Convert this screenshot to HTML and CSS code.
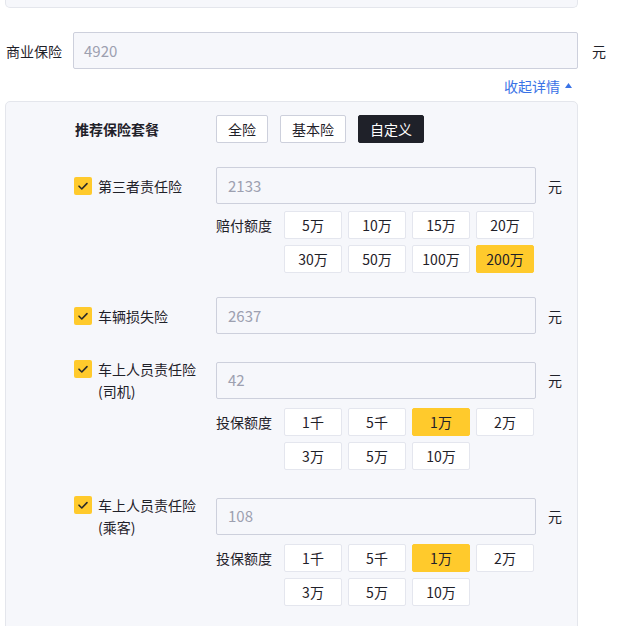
FILE: index.html
```html
<!DOCTYPE html>
<html>
<head>
<meta charset="utf-8">
<link rel="stylesheet" href="styles.css">
</head>
<body>
<div class="page">
  <div class="topbox"></div>

  <div class="main-row">
    <div class="main-label">商业保险</div>
    <div class="input main-input">4920</div>
    <div class="unit">元</div>
  </div>

  <div class="toggle-line">
    <span class="toggle">收起详情<svg class="tri" width="7" height="5" viewBox="0 0 7 5"><path d="M0 5 L3.5 0 L7 5 Z" fill="#3a73e6"/></svg></span>
  </div>

  <div class="panel">
    <div class="pkg-row">
      <div class="left-col pkg-title">推荐保险套餐</div>
      <div class="pkg-btns">
        <span class="pkg-btn">全险</span>
        <span class="pkg-btn">基本险</span>
        <span class="pkg-btn active">自定义</span>
      </div>
    </div>

    <div class="group">
      <div class="item-row">
        <div class="left-col check-wrap">
          <span class="check"><svg width="18" height="18" viewBox="0 0 18 18"><path d="M5 9.2 L7.8 12 L13 6.6" fill="none" stroke="#2a2a2a" stroke-width="1.6" stroke-linecap="round" stroke-linejoin="round"/></svg></span>
          <span class="item-label">第三者责任险</span>
        </div>
        <div class="input item-input">2133</div>
        <div class="unit item-unit">元</div>
      </div>
      <div class="opts">
        <div class="opts-label">赔付额度</div>
        <div class="opts-grid">
          <span class="opt">5万</span>
          <span class="opt">10万</span>
          <span class="opt">15万</span>
          <span class="opt">20万</span>
          <span class="opt">30万</span>
          <span class="opt">50万</span>
          <span class="opt">100万</span>
          <span class="opt sel">200万</span>
        </div>
      </div>
    </div>

    <div class="group">
      <div class="item-row">
        <div class="left-col check-wrap">
          <span class="check"><svg width="18" height="18" viewBox="0 0 18 18"><path d="M5 9.2 L7.8 12 L13 6.6" fill="none" stroke="#2a2a2a" stroke-width="1.6" stroke-linecap="round" stroke-linejoin="round"/></svg></span>
          <span class="item-label">车辆损失险</span>
        </div>
        <div class="input item-input">2637</div>
        <div class="unit item-unit">元</div>
      </div>
    </div>

    <div class="group two-line">
      <div class="item-row">
        <div class="left-col check-wrap">
          <span class="check"><svg width="18" height="18" viewBox="0 0 18 18"><path d="M5 9.2 L7.8 12 L13 6.6" fill="none" stroke="#2a2a2a" stroke-width="1.6" stroke-linecap="round" stroke-linejoin="round"/></svg></span>
          <span class="item-label">车上人员责任险<br>(司机)</span>
        </div>
        <div class="input item-input">42</div>
        <div class="unit item-unit">元</div>
      </div>
      <div class="opts">
        <div class="opts-label">投保额度</div>
        <div class="opts-grid">
          <span class="opt">1千</span>
          <span class="opt">5千</span>
          <span class="opt sel">1万</span>
          <span class="opt">2万</span>
          <span class="opt">3万</span>
          <span class="opt">5万</span>
          <span class="opt">10万</span>
        </div>
      </div>
    </div>

    <div class="group two-line">
      <div class="item-row">
        <div class="left-col check-wrap">
          <span class="check"><svg width="18" height="18" viewBox="0 0 18 18"><path d="M5 9.2 L7.8 12 L13 6.6" fill="none" stroke="#2a2a2a" stroke-width="1.6" stroke-linecap="round" stroke-linejoin="round"/></svg></span>
          <span class="item-label">车上人员责任险<br>(乘客)</span>
        </div>
        <div class="input item-input">108</div>
        <div class="unit item-unit">元</div>
      </div>
      <div class="opts">
        <div class="opts-label">投保额度</div>
        <div class="opts-grid">
          <span class="opt">1千</span>
          <span class="opt">5千</span>
          <span class="opt sel">1万</span>
          <span class="opt">2万</span>
          <span class="opt">3万</span>
          <span class="opt">5万</span>
          <span class="opt">10万</span>
        </div>
      </div>
    </div>
  </div>
</div>
</body>
</html>
```

FILE: styles.css
```css
* { box-sizing: border-box; }

html, body {
  margin: 0;
  padding: 0;
  background: #ffffff;
}

body {
  font-family: "Noto Sans CJK SC", "Noto Sans", sans-serif;
  font-size: 14px;
  line-height: 22px;
  color: #1f2129;
  overflow: hidden;
}

.page {
  padding-left: 5px;
  width: 618px;
}

.topbox {
  width: 573px;
  height: 8px;
  background: #f6f7fb;
  border: 1px solid #e4e6ec;
  border-top: none;
  border-radius: 0 0 5px 5px;
}

.main-row {
  display: flex;
  align-items: center;
  margin-top: 24px;
  height: 37px;
}

.main-label {
  width: 68px;
  padding-left: 1px;
}

.input {
  height: 37px;
  border: 1px solid #cdd0dc;
  border-radius: 2px;
  background: #f6f7fb;
  color: #9da0b0;
  font-size: 15px;
  display: flex;
  align-items: center;
  padding-left: 10px;
}

.main-input {
  width: 505px;
}

.unit {
  margin-left: 14px;
}

.toggle-line {
  width: 573px;
  display: flex;
  justify-content: flex-end;
  margin-top: 6px;
  padding-right: 6px;
}

.toggle {
  color: #3a73e6;
  display: inline-flex;
  align-items: center;
}

.tri {
  margin-left: 5px;
  margin-top: -1px;
}

.panel {
  margin-top: 4px;
  width: 573px;
  background: #f6f7fb;
  border: 1px solid #e4e6ec;
  border-radius: 5px;
  padding: 13px 0 40px 68px;
}

.pkg-row {
  display: flex;
  align-items: center;
  height: 28px;
}

.left-col {
  width: 142px;
  flex: none;
}

.pkg-title {
  font-weight: bold;
  padding-left: 1px;
}

.pkg-btns {
  display: flex;
  gap: 12px;
}

.pkg-btn {
  height: 28px;
  padding: 0 11px;
  border: 1px solid #cdd0dc;
  border-radius: 2px;
  background: #ffffff;
  display: flex;
  align-items: center;
}

.pkg-btn.active {
  background: #1f2129;
  border-color: #1f2129;
  color: #ffffff;
}

.group {
  margin-top: 24px;
}

.item-row {
  display: flex;
  align-items: center;
}

.check-wrap {
  display: flex;
  align-items: flex-start;
}

.check {
  width: 18px;
  height: 18px;
  border-radius: 2px;
  background: #ffca2c;
  flex: none;
  margin-top: 2px;
  margin-right: 6px;
  display: block;
}

.check svg {
  display: block;
}

.item-input {
  width: 320px;
  padding-left: 11px;
}

.item-unit {
  margin-left: 12px;
}

.opts {
  display: flex;
  align-items: flex-start;
  margin-left: 142px;
  margin-top: 7px;
}

.two-line .opts {
  margin-top: 6px;
}

.opts-label {
  width: 68px;
  height: 28px;
  display: flex;
  align-items: center;
}

.opts-grid {
  display: grid;
  grid-template-columns: repeat(4, 58px);
  grid-auto-rows: 28px;
  gap: 6px;
}

.opt {
  background: #ffffff;
  border: 1px solid #e4e6ee;
  border-radius: 2px;
  display: flex;
  align-items: center;
  justify-content: center;
}

.opt.sel {
  background: #ffca2c;
  border-color: #ffca2c;
}
```
